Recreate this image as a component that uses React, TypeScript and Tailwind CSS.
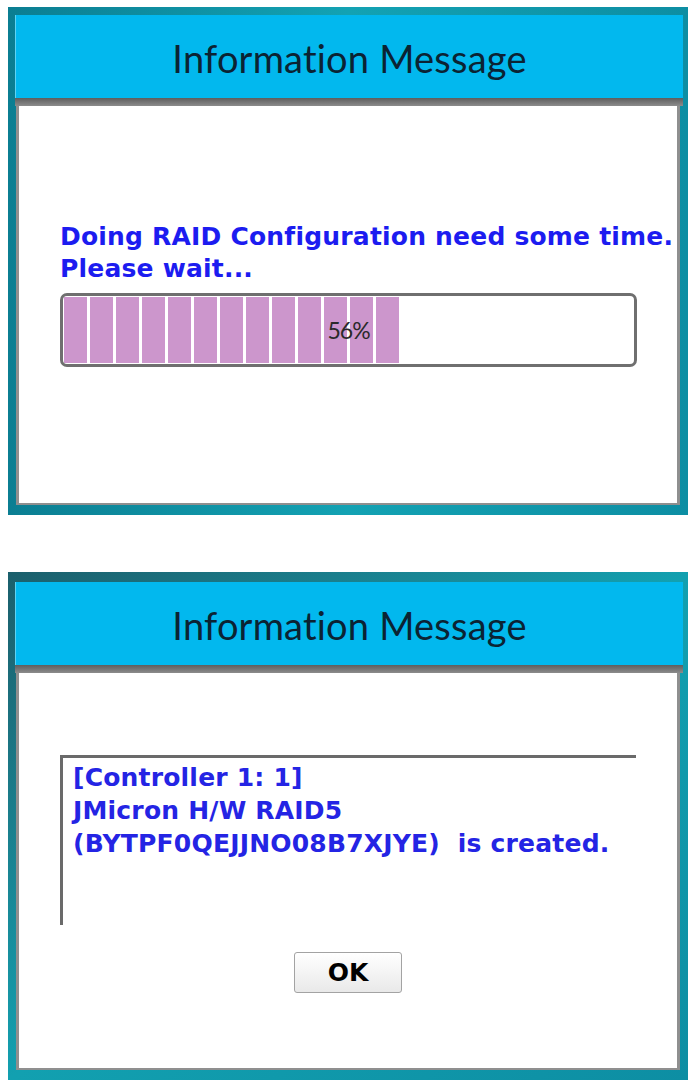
import React from "react";

const titleFont = { fontFamily: "Lato, 'Open Sans', sans-serif" };
const bodyFont = { fontFamily: "'DejaVu Sans', sans-serif" };

function Dialog({ children, top, frame }: { children: React.ReactNode; top: string; frame: string }) {
  return (
    <div className={`w-[680px] h-[508px] flex flex-col pl-[7px] pr-[5px] pb-[10px] ${frame} ${top}`}>
      {/* title bar */}
      <div className="h-[83px] shrink-0 bg-[#02b8ee] border-l border-[#5fd3f3] flex items-center justify-center pt-[3px]">
        <span className="text-[38px] text-[#0b2333] tracking-[0.2px]" style={titleFont}>
          Information Message
        </span>
      </div>
      <div className="h-[8px] shrink-0 bg-linear-to-b from-[#5e5e5e] to-[#8c8c8c]" />
      {/* body */}
      <div className="flex-1 ml-[1px] mr-[3px] bg-white border-x-[3px] border-b-[2px] border-[#8f8f8f]">
        {children}
      </div>
    </div>
  );
}

function ProgressBar({ percent }: { percent: number }) {
  const segments = 13;
  return (
    <div className="relative w-[577px] h-[74px] rounded-[7px] border-[3px] border-[#6f6f6f] bg-white px-[1px] py-[1px] flex gap-[3px]">
      {Array.from({ length: segments }).map((_, i) => (
        <div key={i} className="w-[23px] h-full bg-[#cc96cc]" />
      ))}
      <div className="absolute inset-0 flex items-center justify-center">
        <span className="text-[23px] text-[#2a2a2a] tracking-[-1px]" style={{ fontFamily: "Lato, sans-serif" }}>
          {percent}%
        </span>
      </div>
    </div>
  );
}

export default function App() {
  return (
    <div className="w-[699px] h-[1089px] bg-white pl-[8px] pt-[7px] flex flex-col gap-[57px]">
      <Dialog top="pt-[8px]" frame="bg-linear-to-r from-[#0b7e92] via-[#13a2b3] to-[#0d8ea3]">
        <div className="pl-[41px] pt-[115px]">
          <div
            className="text-[25px] leading-[32px] font-bold text-[#1c1cf0] tracking-[0.2px] whitespace-nowrap"
            style={bodyFont}
          >
            <div>Doing RAID Configuration need some time.</div>
            <div>Please wait...</div>
          </div>
          <div className="mt-[8px]">
            <ProgressBar percent={56} />
          </div>
        </div>
      </Dialog>

      <Dialog top="pt-[10px]" frame="bg-linear-to-br from-[#1b5f6c] via-[#12a0b0] to-[#0d8ea3]">
        <div className="pt-[82px] pl-[41px] flex flex-col">
          <div className="w-[576px] h-[170px] border-t-[3px] border-l-[3px] border-[#6a6a6a] pl-[10px] pt-[3px]">
            <div
              className="text-[25px] leading-[33px] font-bold text-[#2424e4] tracking-[0.2px] whitespace-pre"
              style={bodyFont}
            >
              <div>[Controller 1: 1]</div>
              <div>JMicron H/W RAID5</div>
              <div>(BYTPF0QEJJNO08B7XJYE)  is created.</div>
            </div>
          </div>
          <div className="mt-[27px] pr-[41px] flex justify-center">
            <button
              className="w-[108px] h-[41px] rounded-[3px] border border-[#a3a3a3] bg-linear-to-b from-white to-[#e9e9e9] text-[25px] font-bold text-black"
              style={bodyFont}
            >
              OK
            </button>
          </div>
        </div>
      </Dialog>
    </div>
  );
}
